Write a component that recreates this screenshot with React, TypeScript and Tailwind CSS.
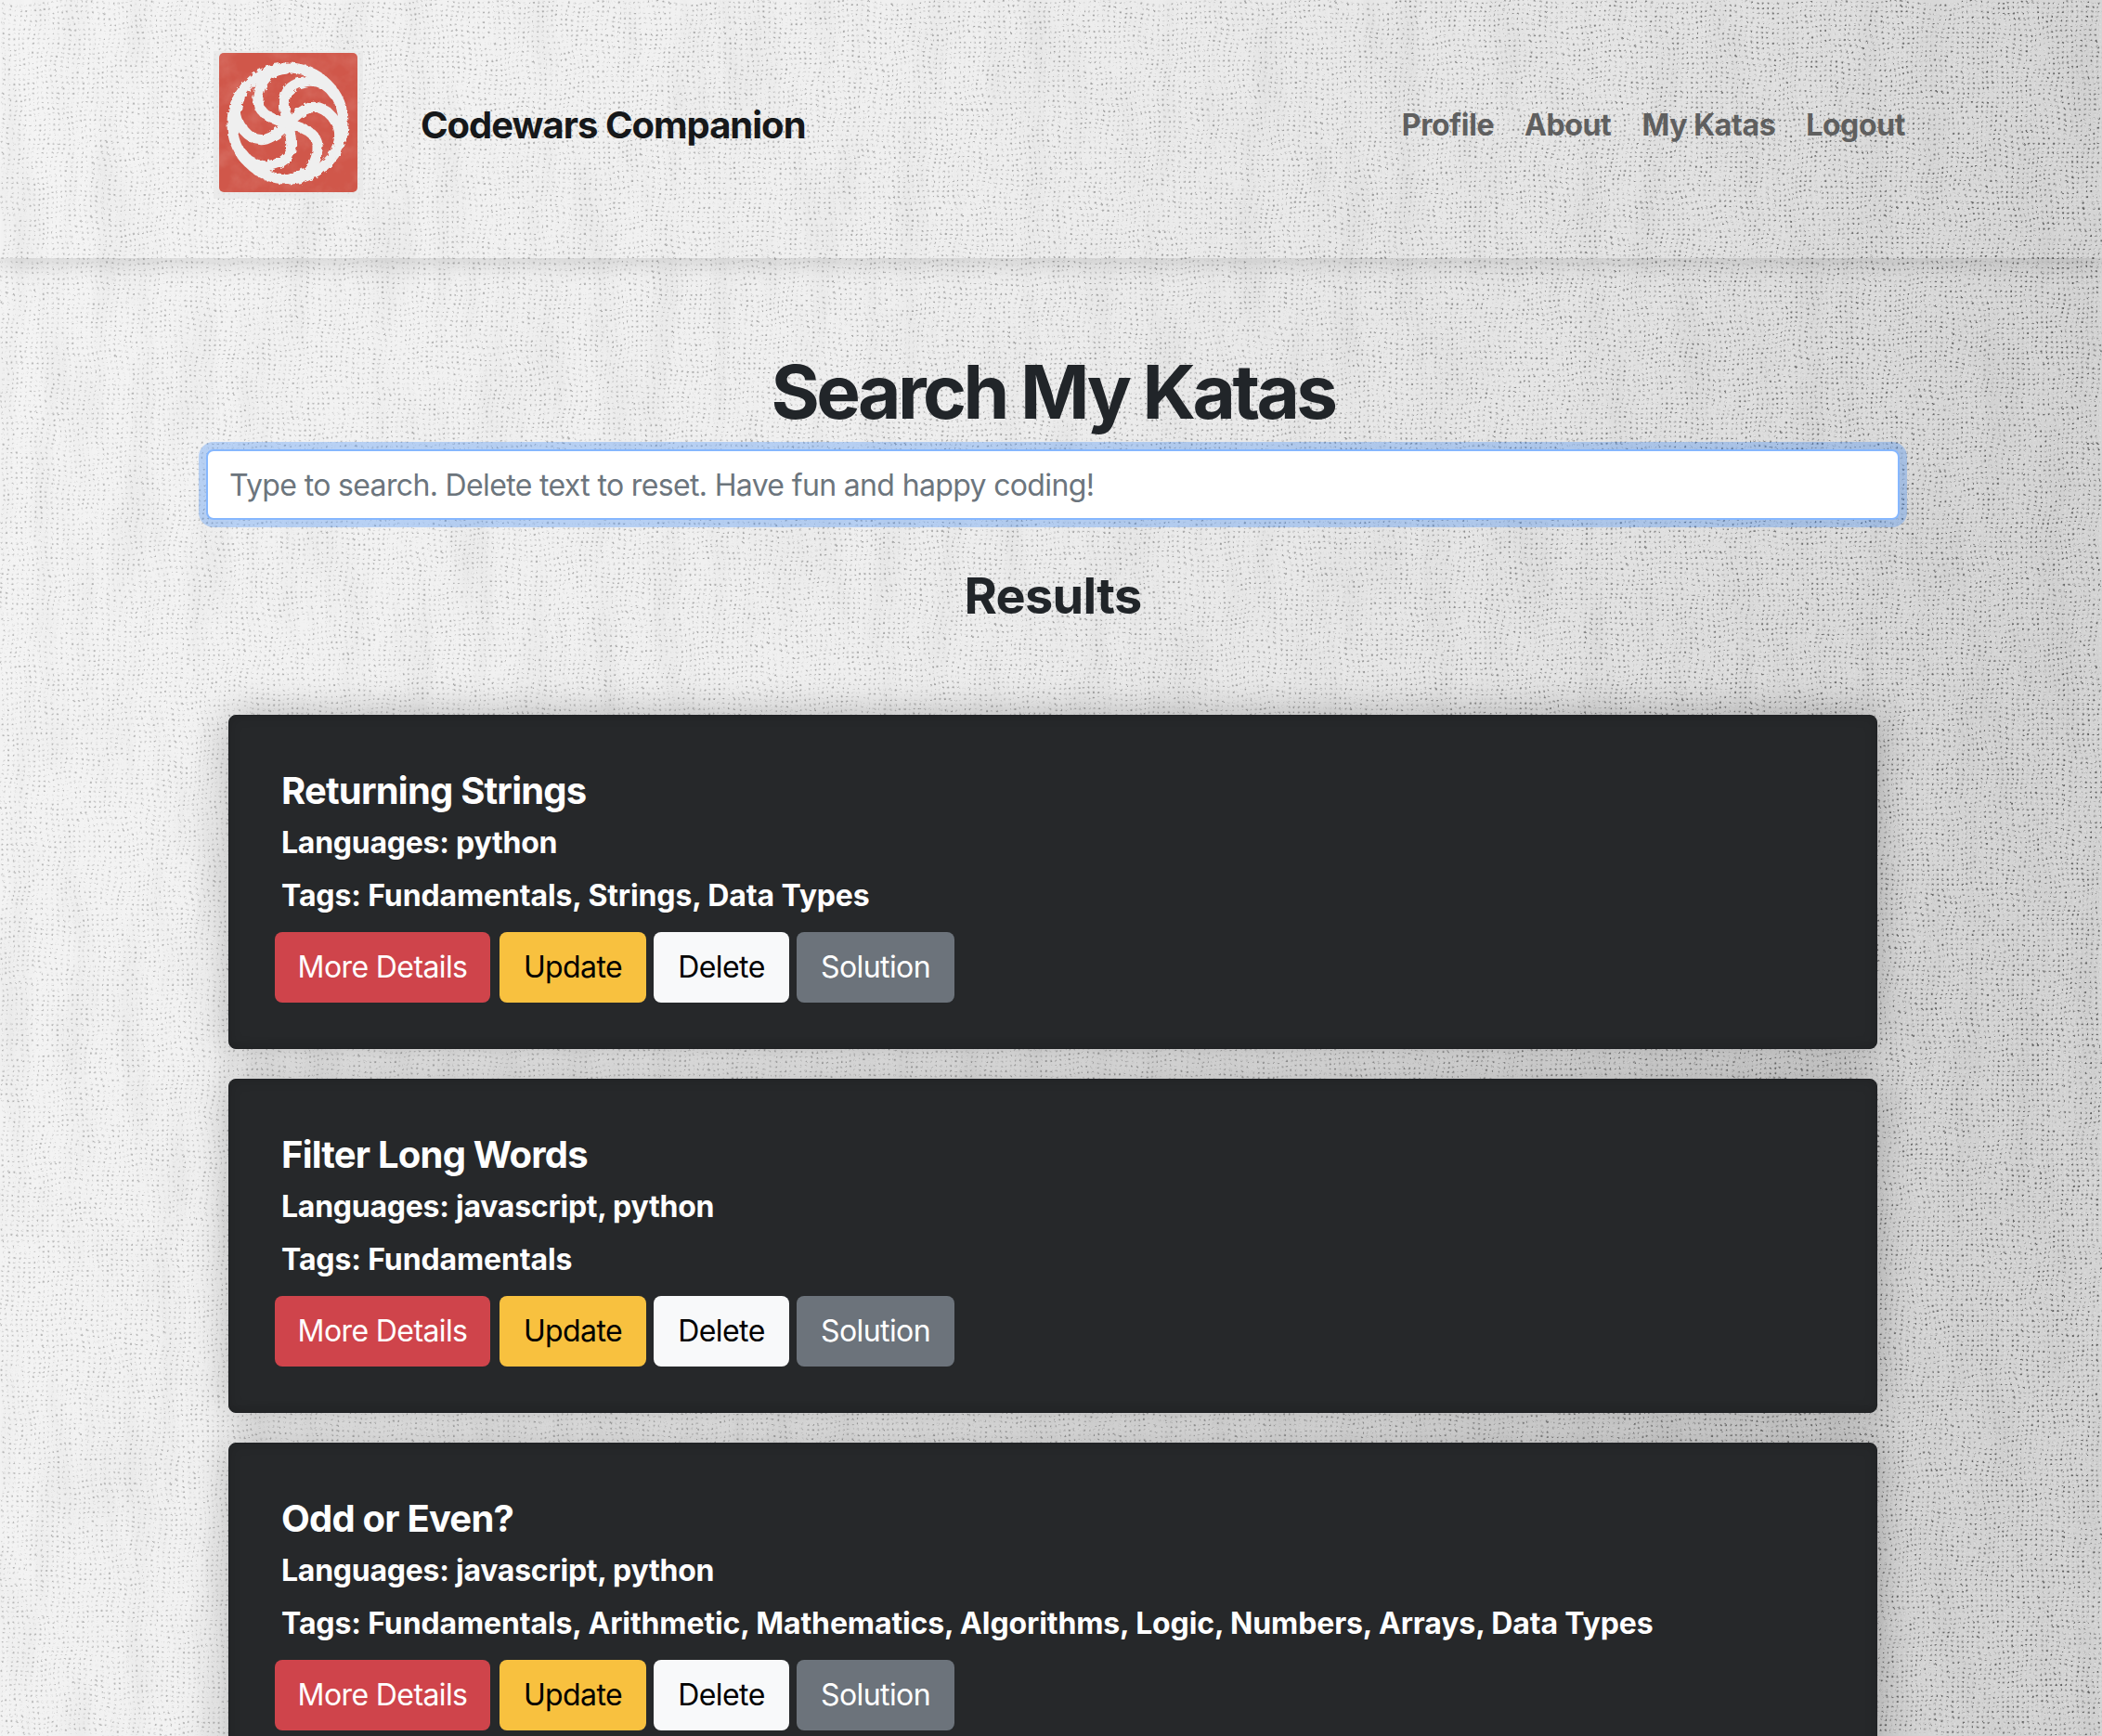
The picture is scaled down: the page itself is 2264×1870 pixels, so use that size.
import React from 'react';

const katas = [
  { title: 'Returning Strings', languages: 'python', tags: 'Fundamentals, Strings, Data Types' },
  { title: 'Filter Long Words', languages: 'javascript, python', tags: 'Fundamentals' },
  {
    title: 'Odd or Even?',
    languages: 'javascript, python',
    tags: 'Fundamentals, Arithmetic, Mathematics, Algorithms, Logic, Numbers, Arrays, Data Types',
  },
];

function Logo() {
  return (
    <div className="-ml-[6px] h-[159px] w-[161px] shrink-0 bg-[#e9e9e9]/80 pl-[6px] pt-[2px]">
      <svg viewBox="0 0 149 150" className="h-[150px] w-[149px]">
        <defs>
          <filter id="rough" x="-5%" y="-5%" width="110%" height="110%">
            <feTurbulence type="fractalNoise" baseFrequency="0.22" numOctaves="2" seed="4" />
            <feDisplacementMap in="SourceGraphic" scale="5" />
          </filter>
          <filter id="mottle" x="0" y="0" width="100%" height="100%">
            <feTurbulence type="fractalNoise" baseFrequency="0.04" numOctaves="4" seed="11" />
            <feColorMatrix values="0 0 0 0 1  0 0 0 0 0.8  0 0 0 0 0.75  1.2 0 0 0 -0.5" />
          </filter>
          <clipPath id="logoBox">
            <rect width="149" height="150" rx="5" />
          </clipPath>
        </defs>
        <g clipPath="url(#logoBox)">
          <rect width="149" height="150" fill="#d0574a" />
          <rect width="149" height="150" filter="url(#mottle)" opacity="0.25" />
        </g>
        <g filter="url(#rough)" fill="none" stroke="#efefef" strokeWidth="11" strokeLinecap="round">
          <circle cx="74" cy="76" r="60" />
          {[0, 60, 120, 180, 240, 300].map((a) => (
            <path key={a} d="M74 76 C68 55 66 36 92 31 C108 28 118 36 124 45" transform={`rotate(${a} 74 76)`} />
          ))}
        </g>
      </svg>
    </div>
  );
}

function KataCard({ title, languages, tags }: { title: string; languages: string; tags: string }) {
  return (
    <div className="h-[360px] shrink-0 rounded-lg border border-[#202225] bg-[#26282a] pl-[49px] pr-[49px] pt-[57px] text-white shadow-[0_0_40px_rgba(0,0,0,0.25),inset_0_0_14px_rgba(0,0,0,0.14)]">
      <h5 className="pl-[7px] text-[40px] leading-[48px] font-bold tracking-[-0.8px]">{title}</h5>
      <p className="mt-[9px] pl-[7px] text-[32px] leading-[46px] font-bold tracking-[-0.25px]">Languages: {languages}</p>
      <p className="mt-[11px] pl-[7px] text-[32px] leading-[46px] font-bold tracking-[-0.12px]">Tags: {tags}</p>
      <div className="mt-[16px] flex gap-[8px] text-[32px] tracking-[-0.6px]">
        <button className="mr-[2px] h-[76px] w-[232px] rounded-lg bg-[#cf444b] text-white">More Details</button>
        <button className="h-[76px] w-[158px] rounded-lg bg-[#f8c13f] text-black">Update</button>
        <button className="h-[76px] w-[146px] rounded-lg bg-[#f8f9fa] text-black">Delete</button>
        <button className="h-[76px] w-[170px] rounded-lg bg-[#6c737b] text-white">Solution</button>
      </div>
    </div>
  );
}

export default function App() {
  return (
    <div className="relative h-[1870px] overflow-hidden bg-[#f4f4f4] font-['Inter',sans-serif] text-[#212529]">
      {/* linen texture */}
      <svg className="pointer-events-none absolute inset-0 h-full w-full">
        <defs>
          <pattern id="dots" width="5.4" height="5.4" patternUnits="userSpaceOnUse">
            <rect x="1.5" y="1.5" width="2.2" height="2.2" fill="#3c3c3c" />
          </pattern>
          <pattern id="lights" width="5.4" height="5.4" patternUnits="userSpaceOnUse">
            <rect x="4" y="4" width="2.6" height="2.6" fill="#fff" />
          </pattern>
          <filter id="speckle" x="0" y="0" width="100%" height="100%">
            <feTurbulence type="fractalNoise" baseFrequency="0.018" numOctaves="2" seed="9" result="warp" />
            <feDisplacementMap in="SourceGraphic" in2="warp" scale="14" result="wobbly" />
            <feTurbulence type="fractalNoise" baseFrequency="0.35" numOctaves="2" seed="7" result="n" />
            <feColorMatrix in="n" values="0 0 0 0 0  0 0 0 0 0  0 0 0 0 0  5 0 0 0 -2.1" result="a" />
            <feComposite in="wobbly" in2="a" operator="in" />
            <feGaussianBlur stdDeviation="0.75" />
          </filter>
          <filter id="threads" x="0" y="0" width="100%" height="100%">
            <feTurbulence type="fractalNoise" baseFrequency="0.03 0.006" numOctaves="3" seed="3" />
            <feColorMatrix values="0 0 0 0 0.2  0 0 0 0 0.2  0 0 0 0 0.2  2 0 0 0 -0.9" />
          </filter>
          <linearGradient id="shade" x1="0" x2="1" y1="0" y2="0.15">
            <stop offset="0" stopColor="#000" stopOpacity="0" />
            <stop offset="0.45" stopColor="#000" stopOpacity="0.02" />
            <stop offset="0.75" stopColor="#000" stopOpacity="0.06" />
            <stop offset="1" stopColor="#000" stopOpacity="0.13" />
          </linearGradient>
          <linearGradient id="fade" x1="0" x2="1" y1="0" y2="0">
            <stop offset="0" stopColor="#fff" stopOpacity="0.4" />
            <stop offset="0.6" stopColor="#fff" stopOpacity="0.55" />
            <stop offset="1" stopColor="#fff" stopOpacity="1" />
          </linearGradient>
          <linearGradient id="fadeRight" x1="0" x2="1" y1="0" y2="0">
            <stop offset="0.5" stopColor="#fff" stopOpacity="0" />
            <stop offset="1" stopColor="#fff" stopOpacity="0.8" />
          </linearGradient>
          <mask id="dotFade">
            <rect width="100%" height="100%" fill="url(#fade)" />
          </mask>
          <mask id="lightFade">
            <rect width="100%" height="100%" fill="url(#fadeRight)" />
          </mask>
        </defs>
        <rect width="100%" height="100%" fill="url(#shade)" />
        <rect width="100%" height="100%" filter="url(#threads)" opacity="0.07" />
        <g mask="url(#dotFade)">
          <rect width="100%" height="100%" fill="url(#dots)" filter="url(#speckle)" opacity="0.8" />
        </g>
        <g mask="url(#lightFade)">
          <rect width="100%" height="100%" fill="url(#lights)" opacity="0.4" />
        </g>
      </svg>

      <div className="relative">
        <header className="flex h-[278px] items-center pb-[9px] pl-[236px] pr-[212px] shadow-[0_6px_22px_rgba(0,0,0,0.13)]">
          <Logo />
          <span className="ml-[62px] text-[40px] font-bold tracking-[-1px] text-[#16181a]">Codewars Companion</span>
          <nav className="ml-auto flex gap-[33px] text-[32px] font-bold tracking-[-0.4px] text-[#5f5f5f]">
            <span>Profile</span>
            <span>About</span>
            <span>My Katas</span>
            <span>Logout</span>
          </nav>
        </header>

        <main className="flex flex-col items-center pl-[4px] pt-[101px]">
          <h1 className="text-[80px] leading-[86px] font-bold tracking-[-3.6px]">Search My Katas</h1>
          <input
            readOnly
            placeholder="Type to search. Delete text to reset. Have fun and happy coding!"
            className="mt-[19px] h-[76px] w-[1824px] rounded-lg border-2 border-[#86b7fe] bg-white pl-[23px] pr-[24px] text-[32px] tracking-[-0.65px] text-[#212529] outline-none ring-8 ring-[#0d6efd]/25 placeholder:text-[#6c757d]"
          />
          <h2 className="mt-[53px] text-[54px] leading-[58px] font-bold tracking-[-0.7px]">Results</h2>
          <section className="mt-[99px] flex w-[1776px] flex-col gap-[32px]">
            {katas.map((k) => (
              <KataCard key={k.title} {...k} />
            ))}
          </section>
        </main>
      </div>
    </div>
  );
}
